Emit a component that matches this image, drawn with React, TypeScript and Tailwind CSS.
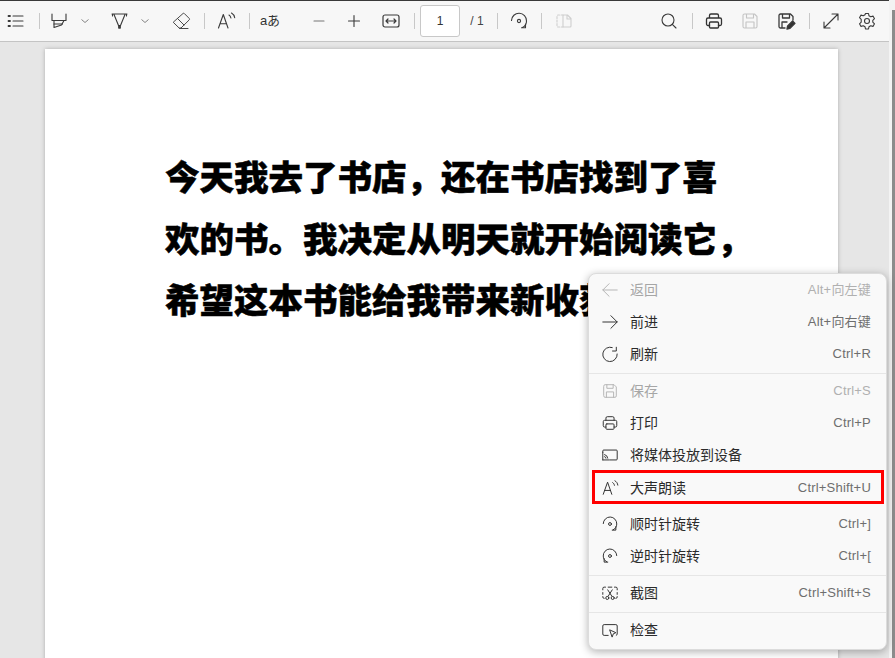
import React from "react";

const S = ({ children, c = "#3a3a3a", w = 20, h = 20, vb = "0 0 20 20", sw = 1.1 }: any) => (
  <svg width={w} height={h} viewBox={vb} fill="none" stroke={c} strokeWidth={sw} strokeLinecap="round" strokeLinejoin="round">
    {children}
  </svg>
);

const Sep = ({ cls }: { cls: string }) => <div className={`h-[16px] w-px shrink-0 bg-[#c8c8c8] ${cls}`} />;
const Box = ({ cls, children }: any) => <div className={`flex h-5 w-5 shrink-0 items-center justify-center ${cls}`}>{children}</div>;
const Chev = ({ cls }: { cls: string }) => (
  <div className={`flex w-[10px] shrink-0 justify-center ${cls}`}>
    <svg width="10" height="6" viewBox="0 0 10 6" fill="none" stroke="#777" strokeWidth="0.9"><path d="M1.500 1.500 5 4.500l3.500-3" /></svg>
  </div>
);

const Back = ({ c }: { c: string }) => <S c={c} w={18} h={18}><path d="M18 10H2M9 3 2 10l7 7" /></S>;
const Forward = ({ c }: { c: string }) => <S c={c} w={18} h={18}><path d="M2 10h16M11 3l7 7-7 7" /></S>;
const Refresh = ({ c }: { c: string }) => <S c={c} w={18} h={18}><path d="M12.500 2.800A8 8 0 1 0 18 10M17 2.500v4.200h-4.200" /></S>;
const Floppy = ({ c, w = 18 }: { c: string; w?: number }) => <S c={c} w={w} h={w}><path d="M3 4.500A1.500 1.500 0 0 1 4.500 3h10L17 5.500v10a1.500 1.500 0 0 1-1.500 1.500h-11A1.500 1.500 0 0 1 3 15.500zM6.500 3v4h7V3M6 17v-6h8v6" /></S>;
const Printer = ({ c, w = 18, sw = 1.1 }: { c: string; w?: number; sw?: number }) => <S c={c} w={w} h={w} sw={sw}><path d="M5.500 7V4.500A1.500 1.500 0 0 1 7 3h6a1.500 1.500 0 0 1 1.500 1.500V7M5.500 14.500H4A1.500 1.500 0 0 1 2.500 13V8.500A1.500 1.500 0 0 1 4 7h12a1.500 1.500 0 0 1 1.500 1.500V13a1.500 1.500 0 0 1-1.500 1.500h-1.500" /><rect x="5.500" y="11" width="9" height="6" rx="1" /></S>;
const Cast = ({ c }: { c: string }) => <S c={c} w={18} h={18}><path d="M2 7V5.500A1 1 0 0 1 3 4.500h14a1 1 0 0 1 1 1v9a1 1 0 0 1-1 1H9.500M2 15.500h6.500M2 7v8.500" /><path d="M4 9.500a4.500 4.500 0 0 1 3.500 4M4 11.800a2 2 0 0 1 1.500 1.700" /></S>;
const ReadAloud = ({ c, w = 18 }: { c: string; w?: number }) => <S c={c} w={w} h={w}><path d="M2.500 17 7.300 3.500 12 17M4 12.700h6.500" /><path d="M13 4c1.100.7 1.700 1.700 1.900 3M15.500 2c1.800 1 2.900 2.600 3.200 4.800" /></S>;
const RotCw = ({ c, w = 18 }: { c: string; w?: number }) => <S c={c} w={w} h={w}><path d="M2.500 9.500a7.500 7.500 0 0 1 15 .5c0 2.800-1.500 5.300-4 6.500" /><path d="M16.500 13v3.800h-4" /><circle cx="10" cy="10" r="1.600" /></S>;
const RotCcw = ({ c }: { c: string }) => <S c={c} w={18} h={18}><path d="M17.500 9.500a7.500 7.500 0 0 0-15 .5c0 2.800 1.500 5.300 4 6.500" /><path d="M3.500 13v3.800h4" /><circle cx="10" cy="10" r="1.600" /></S>;
const Capture = ({ c }: { c: string }) => <S c={c} w={18} h={18}><path d="M5 3.500H3.500A1.500 1.500 0 0 0 2 5v1.500M8 3.500h4M15 3.500h1.500A1.500 1.500 0 0 1 18 5v1.500M18 9.500v2M2 9.500v2M2 14v.5A1.500 1.500 0 0 0 3.500 16M16.500 16a1.500 1.500 0 0 0 1.500-1.500V14" /><path d="M7.500 6.500 12 13.500M12.500 6.500 8 13.500" /><circle cx="7" cy="15.500" r="1.700" /><circle cx="13" cy="15.500" r="1.700" /></S>;
const Inspect = ({ c }: { c: string }) => <S c={c} w={18} h={18}><path d="M8 16H3.500A1.500 1.500 0 0 1 2 14.500v-9A1.500 1.500 0 0 1 3.500 4h13A1.500 1.500 0 0 1 18 5.500v9a1.500 1.500 0 0 1-1 1.400" /><path d="m10 10 6.500 3-2.800 1.200L12.500 17.500z" /></S>;

const Item = ({ icon: I, label, k, dis, cls }: { icon: any; label: string; k: string; dis?: boolean; cls: string }) => (
  <div className={`flex h-[32px] items-center pl-[12px] pr-[15px] ${cls}`}>
    <div className="flex w-[18px] shrink-0 justify-center"><I c={dis ? "#b5b5b5" : "#333333"} /></div>
    <span className={`ml-[11px] whitespace-nowrap text-[14px] ${dis ? "text-[#a6a6a6]" : "text-[#2b2b2b]"}`}>{label}</span>
    <span className={`ml-auto whitespace-nowrap text-[13px] tracking-[0.2px] ${dis ? "text-[#b0b0b0]" : "text-[#6e6e6e]"}`}>{k}</span>
  </div>
);
const Div = ({ cls }: { cls: string }) => <div className={`h-px bg-[#e6e6e6] ${cls}`} />;

export default function App() {
  return (
    <div className="relative flex h-[658px] w-[895px] overflow-hidden bg-[#e6e6e6] font-['Liberation_Sans','Noto_Sans_CJK_SC',sans-serif]">
      <div className="w-[889px] shrink-0">
        <div className="h-px bg-[#3a3a3a]" />
        <div className="flex h-[41px] items-center border-b border-[#c4c4c4] bg-[#f7f7f7]">
          <Box cls="ml-[6px]"><S sw={1.1}><path d="M7 5h10M7 10h10M7 15h10" /><path d="M2.500 5h1.500M2.500 10h1.500M2.500 15h1.500" strokeWidth="1.800" /></S></Box>
          <Sep cls="ml-[13px]" />
          <Box cls="ml-[9px]"><S><path d="M3 3v6.500h14V3M5 9.500v7l7.500-2.500 2.500-4.500" /><path d="M5 13h8.500" /></S></Box>
          <Chev cls="ml-[11px]" />
          <Box cls="ml-[19px]"><S><path d="M3 3h15M3.500 3v2M17.500 3v2M5 3.500l4.500 11h2L16 3.500" /><path d="M9.800 15v2h1.400v-2" strokeWidth="1.400" /></S></Box>
          <Chev cls="ml-[11px]" />
          <Box cls="ml-[21px]"><S sw={1} c="#4a4a4a"><path d="m2.500 11 9.500-8.500a1 1 0 0 1 1.300 0l5 5a1 1 0 0 1 0 1.300L10 17H8.500zM6.500 7.500l6.500 6.500M8.500 17.500h8.500" /></S></Box>
          <Sep cls="ml-[13px]" />
          <Box cls="ml-[11px]"><ReadAloud c="#3a3a3a" w={20} /></Box>
          <Sep cls="ml-[13px]" />
          <div className="ml-[10px] flex h-5 w-5 shrink-0 items-center justify-center whitespace-nowrap text-[13px] text-[#333333]">aあ</div>
          <Box cls="ml-[29px]"><S><path d="M5 10h10" stroke="#777" /></S></Box>
          <Box cls="ml-[15px]"><S><path d="M4.500 10h11M10 4.500v11" /></S></Box>
          <Box cls="ml-[17px]"><S sw={1.2}><rect x="2" y="4" width="16" height="12" rx="2" /><path d="M5 10h10M7 8l-2 2 2 2M13 8l2 2-2 2" /></S></Box>
          <Sep cls="ml-[13px]" />
          <div className="ml-[5px] flex h-[32px] w-[40px] shrink-0 items-center justify-center rounded-[3px] border border-[#c8c8c8] bg-white text-[12px] text-[#333333]">1</div>
          <div className="ml-[10px] w-[14px] shrink-0 whitespace-nowrap text-center text-[12px] text-[#444444]">/ 1</div>
          <Sep cls="ml-[13px]" />
          <Box cls="ml-[11px]"><RotCw c="#3a3a3a" w={20} /></Box>
          <Sep cls="ml-[12px]" />
          <Box cls="ml-[12px]"><S c="#cfcfcf"><path d="M9 4H4a1 1 0 0 0-1 1v10a1 1 0 0 0 1 1h5" strokeDasharray="2 1.500" /><path d="M9 4h4.500L17 7.500V15a1 1 0 0 1-1 1H9zM13 4v4h4" /></S></Box>
          <Box cls="ml-[85px]"><S><circle cx="9" cy="9" r="6" /><path d="m13.300 13.300 3.700 3.700" /></S></Box>
          <Sep cls="ml-[13px]" />
          <Box cls="ml-[11px]"><Printer c="#333333" w={20} sw={1.3} /></Box>
          <Box cls="ml-[16px]"><Floppy c="#c4c4c4" w={20} /></Box>
          <Box cls="ml-[16px]">
            <S sw={1.3}>
              <path d="M9 17H4.500A1.500 1.500 0 0 1 3 15.500v-11A1.500 1.500 0 0 1 4.500 3h10L17 5.500V9M6.500 3v4h7V3M6 17v-6h5" />
              <path d="m11 18 .6-3 5-5 2.400 2.400-5 5z" fill="#333333" />
            </S>
          </Box>
          <Sep cls="ml-[13px]" />
          <Box cls="ml-[11px]"><S><path d="M3 17 17 3M11 3h6v6M3 11v6h6" /></S></Box>
          <Box cls="ml-[16px]"><S><path d="M8.500 2.500h3l.5 2.300 1.700 1 2.300-.7 1.500 2.600-1.700 1.600v1.900l1.700 1.600-1.500 2.600-2.300-.7-1.700 1-.5 2.300h-3l-.5-2.300-1.700-1-2.300.7-1.500-2.600 1.700-1.600V8.300L2.500 6.700 4 4.100l2.300.7 1.700-1z" /><circle cx="10" cy="10" r="2.500" /></S></Box>
        </div>

        <div className="ml-[45px] mt-[7px] h-[620px] w-[793px] bg-white pl-[120px] pt-[96px] shadow-[0_0_4px_rgba(0,0,0,0.25)]">
          <div className="w-[640px] font-['Noto_Sans_CJK_SC',sans-serif] text-[34.500px] font-black leading-[61.500px] text-black [-webkit-text-stroke:0.5px_black]">
            <div className="whitespace-nowrap">今天我去了书店，还在书店找到了喜</div>
            <div className="whitespace-nowrap">欢的书。我决定从明天就开始阅读它，</div>
            <div className="whitespace-nowrap">希望这本书能给我带来新收获。</div>
          </div>
        </div>
      </div>

      <div className="h-full w-[6px] shrink-0 bg-[#f3f3f3] pl-[3px] pt-[10px]">
        <div className="h-full w-[3px] bg-[#8c8c8c]" />
      </div>

      <div className="absolute left-[588px] top-[273px] h-[377px] w-[299px] rounded-[8px] border border-[#dcdcdc] bg-[#f9f9f9] shadow-[0_2px_8px_rgba(0,0,0,0.3)]">
        <Item icon={Back} label="返回" k="Alt+向左键" dis cls="" />
        <Item icon={Forward} label="前进" k="Alt+向右键" cls="" />
        <Item icon={Refresh} label="刷新" k="Ctrl+R" cls="" />
        <Div cls="mt-[3px] mb-[1px]" />
        <Item icon={Floppy} label="保存" k="Ctrl+S" dis cls="" />
        <Item icon={Printer} label="打印" k="Ctrl+P" cls="" />
        <Item icon={Cast} label="将媒体投放到设备" k="" cls="" />
        <Item icon={ReadAloud} label="大声朗读" k="Ctrl+Shift+U" cls="mt-[1px]" />
        <Item icon={RotCw} label="顺时针旋转" k="Ctrl+]" cls="mt-[4px]" />
        <Item icon={RotCcw} label="逆时针旋转" k="Ctrl+[" cls="" />
        <Div cls="mt-[3px] mb-[1px]" />
        <Item icon={Capture} label="截图" k="Ctrl+Shift+S" cls="" />
        <Div cls="mt-[3px] mb-[1px]" />
        <Item icon={Inspect} label="检查" k="" cls="" />
        <div className="absolute left-[3px] top-[196px] h-[34px] w-[292px] border-[3px] border-[#ff0000]" />
      </div>
    </div>
  );
}
